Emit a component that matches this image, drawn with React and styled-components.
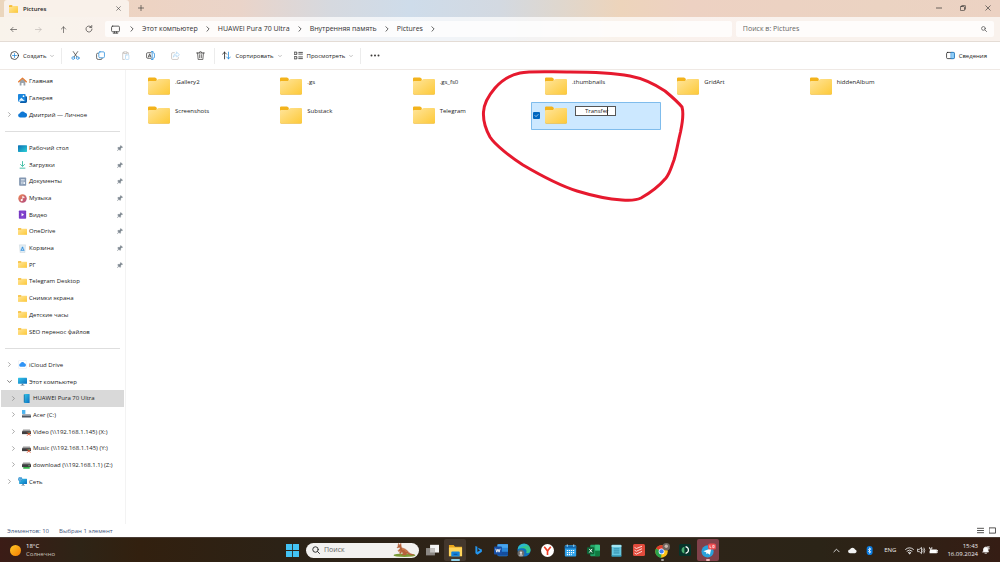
import React from "react";
import styled, { createGlobalStyle } from "styled-components";

const GlobalStyle = createGlobalStyle`
  * { box-sizing: border-box; }
  body {
    margin: 0;
    background: #fff;
    font-family: "Open Sans", "Noto Sans", sans-serif;
    font-size: 6px;
    line-height: 8px;
    color: #1c1c1c;
  }
  button, input { font: inherit; color: inherit; }
  svg { display: block; flex: none; }
`;

const Window = styled.div`
  display: flex;
  flex-direction: column;
  min-height: 100vh;
`;

const Chrome = styled.header`
  background: linear-gradient(90deg, #ebd6bd 0%, #edd3c3 15%, #ead4c9 24%, #d6d9df 33%, #cedcea 41%, #d3d9e1 50%, #dfd7ce 56%, #edd4bb 62%, #edd1c2 69%, #ebd3c2 88%, #ecd2c3 100%);
`;

const TitleBar = styled.div`
  display: flex;
  height: 17px;
  padding-left: 4px;
`;

const Tab = styled.div`
  display: flex;
  align-items: center;
  gap: 5px;
  width: 125px;
  padding: 0 6px 0 5px;
  border-radius: 3px 3px 0 0;
  background: #f9f1ea;
  font-weight: 600;
`;

const Spacer = styled.div`
  flex: 1;
`;

const IconButton = styled.button`
  display: flex;
  flex: none;
  align-items: center;
  justify-content: center;
  width: ${(p) => p.$w || 25}px;
  height: ${(p) => p.$h || 16}px;
  padding: 0;
  border: 0;
  background: none;
  color: ${(p) => (p.disabled ? "#b9b3ae" : "#3d3b3a")};
`;

const AddressBar = styled.div`
  display: flex;
  align-items: center;
  gap: 4px;
  height: 25px;
  padding: 0 6px 0 1px;
  border-bottom: 1px solid #e4dcd5;
  background: rgba(255, 255, 255, 0.7);
`;

const NavButtons = styled.div`
  display: flex;
`;

const Crumbs = styled.nav`
  display: flex;
  flex: 1;
  align-items: center;
  height: 16px;
  padding-left: 6px;
  border-radius: 2px;
  background: rgba(255, 255, 255, 0.75);
  font-size: 7px;
  color: #333;

  > svg:first-child { margin-right: 9px; }
`;

const Crumb = styled.a`
  margin: 0 7px;
  color: inherit;
  text-decoration: none;
  white-space: nowrap;
`;

const SearchBox = styled.label`
  display: flex;
  align-items: center;
  width: 26%;
  height: 16px;
  padding: 0 7px;
  border-radius: 2px;
  background: rgba(255, 255, 255, 0.75);
  color: #555;

  input {
    flex: 1;
    min-width: 0;
    padding: 0;
    border: 0;
    outline: 0;
    background: none;
    font-size: 7px;
  }
  input::placeholder { color: #666; opacity: 1; }
`;

const Toolbar = styled.div`
  display: flex;
  align-items: center;
  height: 28px;
  padding: 0 7px 0 4px;
  border-bottom: 1px solid #efe9e5;
`;

const ToolButton = styled.button`
  display: flex;
  align-items: center;
  gap: 4px;
  height: 20px;
  padding: 0 6px;
  border: 0;
  background: none;
  white-space: nowrap;
`;

const Divider = styled.span`
  width: 1px;
  height: 16px;
  margin: 0 1px;
  background: #ececec;
`;

const Body = styled.div`
  display: flex;
  flex: 1;
`;

const Sidebar = styled.nav`
  flex: none;
  width: 126px;
  padding: 3px 1px 0;
  border-right: 1px solid #f3f3f3;
`;

const Tree = styled.ul`
  display: grid;
  grid-auto-rows: 1fr;
  height: 417px;
  margin: 0;
  padding: 0;
  list-style: none;
`;

const TreeRow = styled.li`
  display: flex;
  align-items: center;
  padding-left: ${(p) => (p.$nested ? 8 : 4)}px;
  padding-right: 1px;
  background: ${(p) => (p.$selected ? "#d9d9d9" : "none")};
`;

const TreeArrow = styled.span`
  display: flex;
  justify-content: center;
  width: 8px;
  margin-right: 5px;
  color: ${(p) => (p.$open ? "#333" : "#777")};
`;

const TreeLink = styled.a`
  display: flex;
  flex: 1;
  align-items: center;
  gap: 2px;
  color: #1c1c1c;
  text-decoration: none;
  white-space: nowrap;
`;

const TreeRule = styled.li`
  align-self: center;
  height: 1px;
  margin: 0 4px;
  background: #dedede;
`;

const Files = styled.main`
  position: relative;
  flex: 1;
  padding: 3px 8px 0;
`;

const FileGrid = styled.ul`
  display: grid;
  grid-template-columns: repeat(6, minmax(0, 1fr));
  grid-auto-rows: 28px;
  gap: 1px 2px;
  max-width: 792px;
  margin: 0;
  padding: 0;
  list-style: none;
`;

const FileItem = styled.li`
  display: flex;
  align-items: center;
  padding-bottom: 2px;
  padding-left: ${(p) => (p.$selected ? 1 : 14)}px;
  border-radius: 1px;
  background: ${(p) => (p.$selected ? "#cce8ff" : "none")};
  box-shadow: ${(p) => (p.$selected ? "inset 0 0 0 1px #7fbcec" : "none")};
`;

const FileName = styled.span`
  align-self: flex-start;
  padding: 5px 0 0 5px;
`;

const SelectBox = styled.input`
  appearance: none;
  width: 7px;
  height: 7px;
  margin: 0 5px 0 1px;
  border-radius: 1px;
  background: #0067c0;
`;

const Tick = styled.span`
  position: relative;
  display: flex;

  svg {
    position: absolute;
    left: 2px;
    top: 1px;
    pointer-events: none;
  }
`;

const RenameField = styled.span`
  position: relative;
  align-self: flex-start;
  width: 41px;
  margin: 4px 0 0 8px;

  input {
    display: block;
    width: 100%;
    height: 10px;
    padding: 0 0 0 9px;
    border: 1px solid #555;
    outline: 0;
    background: #fff;
    caret-color: transparent;
  }
`;

const Caret = styled.i`
  position: absolute;
  top: 1px;
  right: 8px;
  width: 1px;
  height: 8px;
  background: #333;
`;

const Loop = styled.svg`
  position: absolute;
  left: 354px;
  top: 0;
  overflow: visible;
  pointer-events: none;
`;

const StatusBar = styled.div`
  display: flex;
  align-items: center;
  height: 13px;
  padding: 0 2px 0 7px;
  color: #44567d;

  span { margin-right: 10px; }
`;

const Taskbar = styled.footer`
  display: grid;
  grid-template-columns: 1fr auto 1fr;
  align-items: center;
  height: 25px;
  border-top: 1px solid #4a3c34;
  background: linear-gradient(90deg, #3b1c16 0%, #2e2416 8%, #32200f 14%, #2c2216 28%, #2f2419 60%, #2b2417 82%, #351d14 100%);
  color: #eee;
`;

const Weather = styled.div`
  display: flex;
  align-items: center;
  gap: 5px;
  padding-left: 10px;
  color: #c9c0ba;

  strong { display: block; color: #fff; font-weight: 400; }
`;

const Apps = styled.div`
  display: flex;
  align-items: center;
  gap: 1px;
`;

const AppButton = styled.button`
  position: relative;
  display: flex;
  align-items: center;
  justify-content: center;
  width: 22px;
  height: 22px;
  padding: 0;
  border: 0;
  border-radius: 2px;
  background: ${(p) => p.$bg || "none"};

  &::after {
    content: "";
    display: ${(p) => (p.$mark ? "block" : "none")};
    position: absolute;
    bottom: 0;
    width: ${(p) => p.$mark || 0}px;
    height: 2px;
    border-radius: 1px;
    background: ${(p) => p.$markColor || "#a9a39e"};
  }
`;

const TaskSearch = styled.label`
  display: flex;
  align-items: center;
  gap: 4px;
  width: 113px;
  height: 15px;
  margin: 0 1px 0 2px;
  padding: 0 3px 0 6px;
  border-radius: 8px;
  background: #f3f1ef;
  color: #333;

  input {
    flex: 1;
    min-width: 0;
    padding: 0;
    border: 0;
    outline: 0;
    background: none;
    font-size: 7px;
  }
  input::placeholder { color: #666; opacity: 1; }
`;

const Tray = styled.div`
  display: flex;
  align-items: center;
  justify-content: flex-end;
  padding-right: 10px;
`;

const TrayIcons = styled.div`
  display: flex;
  align-items: center;
  gap: ${(p) => p.$gap}px;
  margin-right: ${(p) => p.$after}px;
`;

const Clock = styled.time`
  display: block;
  margin-right: 4px;
  text-align: right;
`;

const HiddenDefs = styled.svg`
  position: absolute;
`;

/* Drawings */

const Line = ({ d, s = 8, w = 1.4, children, ...rest }) => (
  <svg width={s} height={s} viewBox="0 0 16 16" fill="none" stroke="currentColor" strokeWidth={w} strokeLinecap="round" strokeLinejoin="round" {...rest}>
    {d && <path d={d} />}
    {children}
  </svg>
);

const Right = ({ s = 6 }) => <Line s={s} w={2} d="M5 2l6 6-6 6" />;
const Down = ({ s = 4, w = 2, color }) => <Line s={s} w={w} color={color} d="M2 5l6 6 6-6" />;
const Cross = ({ s = 6 }) => <Line s={s} w={1.8} d="M2 2l12 12M14 2L2 14" />;

const Defs = () => (
  <HiddenDefs width="0" height="0" aria-hidden="true">
    <defs>
      <linearGradient id="folder" x1="0" y1="0" x2="1" y2="1">
        <stop offset="0" stopColor="#ffe59c" />
        <stop offset="1" stopColor="#fdc937" />
      </linearGradient>
      <linearGradient id="screen" x1="0" y1="0" x2="1" y2="1">
        <stop offset="0" stopColor="#35c6e8" />
        <stop offset="1" stopColor="#0a6fc0" />
      </linearGradient>
      <linearGradient id="desk" x1="0" y1="0" x2="1" y2="1">
        <stop offset="0" stopColor="#0a6cb4" />
        <stop offset="1" stopColor="#2cd0d6" />
      </linearGradient>
      <linearGradient id="sun" x1="0" y1="0" x2="1" y2="1">
        <stop offset="0" stopColor="#ffc928" />
        <stop offset="1" stopColor="#f57c00" />
      </linearGradient>
      <linearGradient id="music" x1="0" y1="0" x2="1" y2="1">
        <stop offset="0" stopColor="#ee8a55" />
        <stop offset="1" stopColor="#b0457f" />
      </linearGradient>
    </defs>
  </HiddenDefs>
);

const Folder = ({ w = 22, h = 18 }) => (
  <svg width={w} height={h} viewBox="0 0 22 18" preserveAspectRatio="none">
    <path d="M0 1.500Q0 .4 1.200 .4h5.600q.7 0 1.200.7l.8.9v3H0z" fill="#f3b31c" />
    <path d="M0 5q0-.9 1-.9h6.300q.6 0 1.100-.5l1.200-1.100q.4-.4 1-.4H21q1 0 1 1v13.200q0 1.300-1.200 1.300H1.200Q0 17.600 0 16.300z" fill="url(#folder)" />
    <path d="M.3 16.600q.3 1 1.200 1h19q1 0 1.200-1" fill="none" stroke="#e9ae27" strokeWidth=".5" />
  </svg>
);

const Glyph = ({ s = 9, children }) => <svg width={s} height={s} viewBox="0 0 16 16">{children}</svg>;

const monitor = (
  <>
    <rect x="0" y="1.500" width="16" height="10.500" rx="1" fill="url(#screen)" />
    <path d="M6.500 12h3v2h2v1h-7v-1h2z" fill="#5c7c93" />
  </>
);

const drive = (accent) => (
  <>
    <path d="M2 4.500h12l2 4v4.500H0V8.500z" fill="#9a9a9a" />
    <rect x="0" y="7.500" width="16" height="5" rx="1" fill="#3e3e40" />
    <circle cx="12.500" cy="10" r="1" fill="#8be08b" />
    {accent}
  </>
);

const glyphs = {
  home: (
    <>
      <path d="M3 7l5-4.500L13 7v8h-3.200v-4.500H6.200V15H3z" fill="#9aa3ab" />
      <path d="M1.200 8.500L8 2l6.800 6.500" fill="none" stroke="#e8792c" strokeWidth="2.200" strokeLinecap="round" strokeLinejoin="round" />
    </>
  ),
  gallery: (
    <>
      <path d="M12 4h2.500q1.500 0 1.500 1.500v8q0 2.500-2.500 2.500H5q-1.500 0-1.500-1.500z" fill="#0b5ca8" />
      <rect x="0" y="0" width="13.500" height="13.500" rx="1.500" fill="#1b86dd" />
      <path d="M1 12l5-5.500 6 6z" fill="#e4f6ff" />
      <circle cx="9.800" cy="3.800" r="1.500" fill="#fff" />
    </>
  ),
  cloud: <path d="M4 13.500a4 4 0 01-.6-7.900 5 5 0 019-.6A4.300 4.300 0 0112.500 13.500z" fill="#0f78d4" />,
  desktop: <rect x="0" y="2" width="16" height="12" rx="1" fill="url(#desk)" />,
  download: <path d="M8 2v9M4 7.500L8 11.500l4-4M3 14.500h10" fill="none" stroke="#2bb59a" strokeWidth="1.500" />,
  doc: (
    <>
      <rect x="2" y="1" width="12.500" height="14.500" rx="1.200" fill="#8397b1" />
      <path d="M5 4.500h7M5 7h7M5 9.500h3.500M5 12h3.500" stroke="#eef4fb" strokeWidth="1.300" />
      <rect x="9.500" y="9" width="3" height="3.500" fill="#eef4fb" />
    </>
  ),
  music: (
    <>
      <circle cx="8" cy="8" r="7.500" fill="url(#music)" />
      <path d="M7.800 11V4l3.200 1.300v1.900L8.600 6.200" fill="#fff" stroke="#fff" strokeWidth=".6" />
      <circle cx="6.600" cy="10.800" r="1.900" fill="#fff" />
    </>
  ),
  video: (
    <>
      <rect x="1.500" y="1" width="13" height="14.500" rx="1.200" fill="#8443cf" />
      <path d="M3.200 2.500v12M12.800 2.500v12" stroke="#51219a" strokeWidth="1.200" strokeDasharray="1.200 1.200" />
      <path d="M6.300 5.500l4.500 2.800-4.500 2.800z" fill="#fff" />
    </>
  ),
  bin: (
    <>
      <path d="M2.500 1.500h11l-1.300 14H3.800z" fill="#e3edf3" stroke="#bfcbd3" strokeWidth=".7" />
      <path d="M8 4.800l2 3H6zM4.800 11.500l1.300-2.700 1.800 2.700zM11.200 11.500l-1.300-2.700-1.800 2.700z" fill="#2a8ee0" stroke="#2a8ee0" strokeWidth=".7" />
    </>
  ),
  icloud: (
    <>
      <rect x=".5" y=".5" width="15" height="15" rx="3" fill="#fff" stroke="#e4e9ef" />
      <path d="M4.300 12a2.900 2.900 0 01-.1-5.600 3.800 3.800 0 017.200-.6 3.200 3.200 0 01.6 6.200z" fill="#2f93f5" />
    </>
  ),
  monitor,
  phone: (
    <>
      <rect x="4" y="0" width="9.500" height="16" rx="1" fill="url(#screen)" />
      <path d="M4 1v14" stroke="#0b6aa2" strokeWidth="1.500" />
    </>
  ),
  disk: (
    <>
      <path d="M0 0h6v7H0z" fill="#4db4ef" />
      <path d="M1 8h14l1 2v3.500H0V10z" fill="#4c5560" />
      <path d="M1.500 8h13l1 2H.5z" fill="#a7b0b8" />
    </>
  ),
  netRed: drive(<path d="M9 9.500l6 6M15 9.500l-6 6" stroke="#e2502a" strokeWidth="1.600" />),
  netGreen: drive(<rect x="2" y="12.500" width="12" height="3" rx="1.500" fill="#35b44a" />),
  network: (
    <>
      <g transform="translate(2 2) scale(.88)">{monitor}</g>
      <circle cx="4" cy="4" r="3.800" fill="#2787c8" />
      <path d="M.5 4h7M4 .3c-2 2.200-2 5.200 0 7.400M4 .3c2 2.200 2 5.200 0 7.400" stroke="#aee3ff" strokeWidth=".7" fill="none" />
    </>
  ),
};

const Pin = () => (
  <svg width="6" height="6" viewBox="0 0 16 16">
    <path d="M10 1l5 5-1.500 1-1-.2-3 3 .2 3.200-1.500 1.500-3-3L1 15.500.5 15l4-4.200-3-3L3 6.300l3.200.2 3-3L9 2.500z" fill="#7b858e" stroke="#7b858e" />
  </svg>
);

const Kangaroo = () => (
  <svg width="23" height="14" viewBox="0 0 23 14">
    <ellipse cx="11.500" cy="12.300" rx="11" ry="1.700" fill="#7a9c36" />
    <path d="M5 3.500L5.500.5l1.200 2L7.800.4l.4 3 .5 1.500c2.500.6 4.800 1.500 6.200 3.500 1 1.600 3.500 3 6 3.400-2.600.8-5.300-.3-7-1.900l-.8 2H8.600l1.700-1.500-1.500-2-1 2-1.200-.2.900-2.700-1.800 1-.6-.8 2-2.200-.2-1.300L4 4.800z" fill="#b5623a" stroke="#b5623a" strokeWidth=".6" />
    <path d="M9 6c2 .3 3.500 1.200 4.500 3" stroke="#d98a58" strokeWidth=".8" fill="none" />
  </svg>
);

const apps = [
  ["Представление задач", <Glyph s={13}><rect x="5" y="1" width="11" height="9.500" fill="#f4f4f4" /><rect x="0" y="5" width="11" height="9" fill="#8c8884" /><rect x="5" y="5" width="6" height="5.500" fill="#c4c2c0" /></Glyph>],
  ["Проводник", <Glyph s={15}><path d="M1 2h5l1.500 2H15v10H1z" fill="#e9a51c" /><path d="M1 4.800h14V14H1z" fill="#ffd45a" /><path d="M4.500 9h7q1 0 1 1v4.500h-9V10q0-1 1-1z" fill="#1583dc" /><path d="M6 12h4" stroke="#0b4e93" /></Glyph>, { $bg: "#43372d", $mark: 9, $markColor: "#8fd0e8" }],
  ["Bing", <Glyph s={9}><path d="M2.500 0l3.500 1.500v9l5-2.800-2.500-1.200L7 3l7 3v4L6 15.500 2.500 13z" fill="#2496ef" /></Glyph>],
  ["Word", <Glyph s={14}><rect x="4" y="1" width="12" height="14" rx="1.500" fill="#2a86d8" /><path d="M4 1.500h12v4H4z" fill="#48a5ee" /><path d="M4 10h12v4.500H4z" fill="#144d9c" /><rect x="0" y="4" width="9" height="9" rx="1" fill="#174ea6" /><path d="M2 6.500l1.200 4L4.500 7l1.300 3.500L7 6.500" stroke="#fff" fill="none" /></Glyph>],
  ["Edge", <Glyph s={14}><circle cx="8" cy="8" r="7.500" fill="#0f70bf" /><path d="M.8 7A7.400 7.400 0 0115.500 8c0 3-2.500 4-5 3.500 1.500-3.500-1-5.500-4-5.500C4 6 2 6.500.8 7z" fill="#35c78e" /><path d="M.8 7C2 1 9 0 12.500 3 8 2.500 5 5 .8 7z" fill="#2ab4dc" /><circle cx="4.500" cy="12" r="3.900" fill="#6b6b6b" /><circle cx="4.500" cy="11" r="1.400" fill="#ddd" /><path d="M2 14.300q2.500-2.800 5 0" fill="#ddd" /></Glyph>],
  ["Яндекс", <Glyph s={13}><circle cx="8" cy="8" r="8" fill="#fff" /><path d="M4 3.500l4 5v5" stroke="#f03e26" strokeWidth="2" fill="none" /><path d="M12 3.500l-4 5" stroke="#f03e26" strokeWidth="2" /></Glyph>],
  ["Календарь", <Glyph s={13}><rect x="1" y="1.500" width="14" height="14" rx="1" fill="#2da1ea" /><path d="M1 2.500h14v3H1z" fill="#1269ae" /><path d="M3.500 8h9.500M3.500 10.500h9.500M3.500 13h6" stroke="#fff" strokeWidth="1.500" strokeDasharray="1.500 1" /><path d="M4 .5v3M12 .5v3" stroke="#cdeaff" /></Glyph>],
  ["Excel", <Glyph s={13}><rect x="4" y="1" width="12" height="14" rx="1" fill="#21a366" /><path d="M10 8h6v6q0 1-1 1h-5z" fill="#107c41" /><path d="M10 1h5q1 0 1 1v6h-6z" fill="#36c481" /><rect x="0" y="4" width="9" height="8.500" rx="1" fill="#0d6235" /><path d="M2.800 6l3.500 4.500M6.300 6l-3.500 4.500" stroke="#fff" strokeWidth="1.200" /></Glyph>],
  ["Блокнот", <Glyph s={13}><rect x="2" y="1" width="12" height="14.500" rx="1" fill="#65c7e0" /><path d="M2 1.500h12v2H2z" fill="#b4edf7" /><path d="M4.500 6h7M4.500 8.500h7M4.500 11h7" stroke="#237d9d" /><path d="M2 14h12v1.500H2z" fill="#2689a8" /></Glyph>],
  ["Todoist", <Glyph s={12}><rect x="0" y="0" width="16" height="16" rx="2" fill="#e14b3c" /><path d="M2 4.500l2.500 1.500L12 3M2 8.200l2.500 1.500L12 6.200M2 12l2.500 1.500L12 9.800" stroke="#ffe7e3" strokeWidth="1.200" fill="none" /></Glyph>],
  ["Chrome", <Glyph s={15}><circle cx="7" cy="9" r="6.600" fill="#fbc116" /><path d="M7 9L1.200 5.800A6.600 6.600 0 0113 6.200z" fill="#e33b2e" /><path d="M7 9L1.200 5.800A6.600 6.600 0 006.500 15.600z" fill="#2ba24c" /><circle cx="7" cy="9" r="3.100" fill="#fff" /><circle cx="7" cy="9" r="2.300" fill="#3f7ff0" /><circle cx="12" cy="4" r="4" fill="#6f655f" /><circle cx="12" cy="3.500" r="1.800" fill="#c9b8ad" /></Glyph>, { $mark: 3 }],
  ["Браузер", <Glyph s={12}><rect x="0" y="0" width="16" height="16" rx="2" fill="#07342a" /><path d="M7.200 3.500q-3.800 1-3.800 4.500t3.800 4.500z" fill="#4cae72" /><path d="M8.800 3.500q3.800 1 3.800 4.500t-3.800 4.500" fill="none" stroke="#fff" strokeWidth="1.500" /></Glyph>],
  ["Telegram", <Glyph s={15}><circle cx="7" cy="9" r="6.500" fill="#2aa1da" /><path d="M2.500 8.800L11 5.500 9.500 12.500 7 10.800 5.800 12l-.3-2.200z" fill="#fff" /><rect x="7.500" y=".5" width="8.500" height="6.500" rx="2" fill="#ef4a4f" /><path d="M9.500 2.500v2.500h1.500M12.500 2.500h1.500v2.500h-1.500z" stroke="#fff" strokeWidth=".7" fill="none" /></Glyph>, { $bg: "#81414a", $mark: 4, $markColor: "#f3b5b5" }],
];

const tree = [
  { icon: "home", text: "Главная" },
  { icon: "gallery", text: "Галерея" },
  { icon: "cloud", text: "Дмитрий — Личное", arrow: "right" },
  null,
  { icon: "desktop", text: "Рабочий стол", pin: true },
  { icon: "download", text: "Загрузки", pin: true },
  { icon: "doc", text: "Документы", pin: true },
  { icon: "music", text: "Музыка", pin: true },
  { icon: "video", text: "Видео", pin: true },
  { icon: "folder", text: "OneDrive", pin: true },
  { icon: "bin", text: "Корзина", pin: true },
  { icon: "folder", text: "РГ", pin: true },
  { icon: "folder", text: "Telegram Desktop" },
  { icon: "folder", text: "Снимки экрана" },
  { icon: "folder", text: "Детские часы" },
  { icon: "folder", text: "SEO перенос файлов" },
  null,
  { icon: "icloud", text: "iCloud Drive", arrow: "right" },
  { icon: "monitor", text: "Этот компьютер", arrow: "down" },
  { icon: "phone", text: "HUAWEI Pura 70 Ultra", arrow: "right", nested: true, selected: true },
  { icon: "disk", text: "Acer (C:)", arrow: "right", nested: true },
  { icon: "netRed", text: "Video (\\\\192.168.1.145) (X:)", arrow: "right", nested: true },
  { icon: "netRed", text: "Music (\\\\192.168.1.145) (Y:)", arrow: "right", nested: true },
  { icon: "netGreen", text: "download (\\\\192.168.1.1) (Z:)", arrow: "right", nested: true },
  { icon: "network", text: "Сеть", arrow: "right" },
];

const folders = [".Gallery2", ".gs", ".gs_fs0", ".thumbnails", "GridArt", "hiddenAlbum", "Screenshots", "Substack", "Telegram"];
const crumbs = ["Этот компьютер", "HUAWEI Pura 70 Ultra", "Внутренняя память", "Pictures"];

const blue = "#1e88dc";
const gray = "#888";

export default function App() {
  return (
    <Window>
      <GlobalStyle />
      <Defs />
      <Chrome>
        <TitleBar>
          <Tab>
            <Folder w={9} h={8} />
            Pictures
            <Spacer />
            <IconButton $w={10} $h={12} aria-label="Закрыть вкладку"><Cross s={5} /></IconButton>
          </Tab>
          <IconButton $w={24} aria-label="Новая вкладка"><Line s={6} w={1.8} d="M8 1v14M1 8h14" /></IconButton>
          <Spacer />
          <IconButton $w={24} $h={15} aria-label="Свернуть"><Line s={6} w={2} d="M1 8h14" /></IconButton>
          <IconButton $w={24} $h={15} aria-label="Развернуть">
            <Line s={6} w={2}><rect x="1" y="4" width="11" height="11" rx="2" /><path d="M5 1h7q3 0 3 3v7" /></Line>
          </IconButton>
          <IconButton $w={25} $h={15} aria-label="Закрыть"><Cross /></IconButton>
        </TitleBar>
        <AddressBar>
          <NavButtons>
            <IconButton aria-label="Назад"><Line s={7} d="M15 8H2M7 3L2 8l5 5" /></IconButton>
            <IconButton disabled aria-label="Вперёд"><Line s={7} d="M1 8h13M9 3l5 5-5 5" /></IconButton>
            <IconButton aria-label="Вверх"><Line s={7} d="M8 15V2M3 7l5-5 5 5" /></IconButton>
            <IconButton aria-label="Обновить"><Line d="M14 8a6 6 0 11-2-4.500M13.500 1v4h-4" /></IconButton>
          </NavButtons>
          <Crumbs aria-label="Путь">
            <Line s={9}><rect x="1" y="2" width="14" height="10" rx="2" /><path d="M6 12v2M10 12v2M4 14.500h8" /></Line>
            <Right />
            {crumbs.map((c) => (
              <React.Fragment key={c}>
                <Crumb href="#">{c}</Crumb>
                <Right />
              </React.Fragment>
            ))}
          </Crumbs>
          <SearchBox>
            <input placeholder="Поиск в: Pictures" aria-label="Поиск в: Pictures" />
            <Line s={6} w={2}><circle cx="6.500" cy="6.500" r="5" /><path d="M10.500 10.500L15 15" /></Line>
          </SearchBox>
        </AddressBar>
      </Chrome>

      <Toolbar>
        <ToolButton>
          <Line s={9} w={1.300}><circle cx="8" cy="8" r="7" /><path d="M8 4.500v7M4.500 8h7" stroke={blue} /></Line>
          Создать
          <Down color={gray} />
        </ToolButton>
        <Divider />
        <IconButton aria-label="Вырезать">
          <Line s={9} w={1.300}><path d="M4 1l6.500 9.500M12 1L5.500 10.500" /><circle cx="4" cy="12.500" r="2.400" stroke={blue} /><circle cx="12" cy="12.500" r="2.400" stroke={blue} /></Line>
        </IconButton>
        <IconButton aria-label="Копировать">
          <Line s={9} w={1.300}><path d="M4 4H3Q1 4 1 6v6q0 3 3 3h5q2 0 2-2" /><rect x="5" y="1.500" width="10" height="10.500" rx="2" stroke={blue} /></Line>
        </IconButton>
        <IconButton disabled aria-label="Вставить">
          <Line s={9} w={1.200}><path d="M6 15H3V3h2m6 0h2v3M5.500 1.500h5v3h-5z" /><rect x="8" y="7" width="6" height="8" rx="1" stroke="#a9d3f2" /></Line>
        </IconButton>
        <IconButton aria-label="Переименовать">
          <Line s={9} w={1.300}><path d="M9 3H3Q1 3 1 5v6q0 2 2 2h6M4 11l2.500-6L9 11M5 9h3" /><path d="M9.500 1h3m-1.500 0v14m-1.500 0h3M13 3q2 0 2 2v6q0 2-2 2" stroke={blue} /></Line>
        </IconButton>
        <IconButton disabled aria-label="Поделиться">
          <Line s={9} w={1.200}><path d="M6 3H3Q1 3 1 5v8q0 2 2 2h8q2 0 2-2v-2" /><path d="M10 2l5 4.500-5 4V8Q6 8 4 11q0-6 6-6.500z" stroke="#a9d3f2" /></Line>
        </IconButton>
        <IconButton aria-label="Удалить">
          <Line s={9} w={1.300} d="M1 3.500h14M5.500 3.500Q5.500 1 8 1t2.500 2.500M2.800 3.500l1 11.500h8.400l1-11.500M6.500 6.500v5.500M9.500 6.500v5.500" />
        </IconButton>
        <Divider />
        <ToolButton>
          <Line s={9} w={1.400}><path d="M4.500 14V2M1 5.500L4.500 2 8 5.500" /><path d="M11.500 2v12M8 10.500l3.500 3.500 3.500-3.500" stroke={blue} /></Line>
          Сортировать
          <Down color={gray} />
        </ToolButton>
        <ToolButton>
          <Line s={9} w={1.300}><rect x="1" y="2" width="4" height="4" /><rect x="1" y="10" width="4" height="4" /><path d="M8.500 2.500H15M8.500 5.500H15M8.500 10.500H15M8.500 13.500H15" /></Line>
          Просмотреть
          <Down color={gray} />
        </ToolButton>
        <Divider />
        <IconButton aria-label="Ещё">
          <svg width="10" height="3" viewBox="0 0 10 3" fill="currentColor"><circle cx="1.500" cy="1.500" r="1" /><circle cx="5" cy="1.500" r="1" /><circle cx="8.500" cy="1.500" r="1" /></svg>
        </IconButton>
        <Spacer />
        <ToolButton>
          <Line s={9} w={1.300}><rect x="1" y="2.500" width="14" height="11" rx="2" /><path d="M9.500 2.500H13q2 0 2 2v7q0 2-2 2H9.500z" fill="#8fcdf7" stroke={blue} /></Line>
          Сведения
        </ToolButton>
      </Toolbar>

      <Body>
        <Sidebar aria-label="Область навигации">
          <Tree>
            {tree.map((n, i) =>
              n ? (
                <TreeRow key={i} $nested={n.nested} $selected={n.selected}>
                  <TreeArrow $open={n.arrow === "down"}>
                    {n.arrow === "right" && <Right s={5} />}
                    {n.arrow === "down" && <Down s={5} />}
                  </TreeArrow>
                  <TreeLink href="#">
                    {n.icon === "folder" ? <Folder w={9} h={7} /> : <Glyph s={9}>{glyphs[n.icon]}</Glyph>}
                    {n.text}
                  </TreeLink>
                  {n.pin && <Pin />}
                </TreeRow>
              ) : (
                <TreeRule key={i} role="separator" />
              )
            )}
          </Tree>
        </Sidebar>
        <Files>
          <FileGrid>
            {folders.map((f) => (
              <FileItem key={f}>
                <Folder />
                <FileName>{f}</FileName>
              </FileItem>
            ))}
            <FileItem $selected>
              <Tick>
                <SelectBox type="checkbox" defaultChecked aria-label="Выбрать Transfer" />
                <Line s={5} w={2} stroke="#fff" d="M3 8l3.500 3.500L13 5" />
              </Tick>
              <Folder />
              <RenameField>
                <input defaultValue="Transfer" aria-label="Имя папки" />
                <Caret />
              </RenameField>
            </FileItem>
          </FileGrid>
          <Loop width="206" height="134" viewBox="480 70 206 134" fill="none" stroke="#e6192e" strokeWidth="3" strokeLinecap="round" strokeLinejoin="round">
            <path d="M520 73C530 71 548 72 570 72C590 72 613 73 630 76C646 79 656 85 665 91C671 96 677 101 682 107C684 114 682 125 680.500 132C678 142 677 150 674 160C671 168 670 173 666 178C660 185 650 193 641 198C635 201 628 200.500 622 200C607 199 590 195 577 191C558 185 540 175 523 165C512 158 495 145 490 137C485 128 483 120 483.500 112C484 102 489 95 495 88C502 80 510 75 520 73" />
          </Loop>
        </Files>
      </Body>

      <StatusBar>
        <span>Элементов: 10</span>
        <span>Выбран 1 элемент</span>
        <Spacer />
        <IconButton $w={12} $h={10} aria-label="Таблица"><Line s={7} w={2} d="M1 3h14M1 8h14M1 13h14" /></IconButton>
        <IconButton $w={12} $h={10} aria-label="Крупные значки"><Line s={7} w={2}><rect x="1" y="2" width="14" height="12" /></Line></IconButton>
      </StatusBar>

      <Taskbar>
        <Weather>
          <svg width="11" height="11" viewBox="0 0 11 11"><circle cx="5.500" cy="5.500" r="5.500" fill="url(#sun)" /></svg>
          <div><strong>18°C</strong>Солнечно</div>
        </Weather>
        <Apps>
          <AppButton aria-label="Пуск">
            <Glyph s={13}><path d="M0 0h7.500v7.500H0zM8.500 0H16v7.500H8.500zM0 8.500h7.500V16H0zM8.500 8.500H16V16H8.500z" fill="#43c3f5" /></Glyph>
          </AppButton>
          <TaskSearch>
            <Line s={8} w={2}><circle cx="7" cy="7" r="5.500" /><path d="M11 11l4 4" /></Line>
            <input placeholder="Поиск" aria-label="Поиск" />
            <Kangaroo />
          </TaskSearch>
          {apps.map(([name, icon, props]) => (
            <AppButton key={name} aria-label={name} {...props}>{icon}</AppButton>
          ))}
        </Apps>
        <Tray>
          <TrayIcons $gap={8} $after={10}>
            <Line s={7} w={2} d="M2 11l6-6 6 6" />
            <Glyph s={9}><path d="M4 13a3.500 3.500 0 01-.6-7 5 5 0 019.200 0A3.600 3.600 0 0112.500 13z" fill="#f2f2f2" /></Glyph>
            <Glyph s={9}><rect x="3" y="0" width="10.500" height="16" rx="5" fill="#0a7be0" /><path d="M5.500 5.500l5 5L8 13V3l2.500 2.500-5 5" fill="none" stroke="#fff" strokeWidth="1.200" /></Glyph>
          </TrayIcons>
          <TrayIcons $gap={3} $after={9}>ENG</TrayIcons>
          <TrayIcons $gap={3} $after={9}>
            <Line s={9} w={1.600}><path d="M1 6q7-6 14 0M3.500 9q4.500-4 9 0M6 11.500q2-1.700 4 0" /><circle cx="8" cy="13.500" r=".7" /></Line>
            <Line s={9} w={1.400} d="M1 6v4h3l4 3.500v-11L4 6zM10.500 5.500q1.500 2.500 0 5M12.500 3.500q3 4.500 0 9" />
            <Glyph s={9}><path d="M3 6h11v7H1V9z" fill="#fff" /><path d="M14 8h2v3h-2M1 2v3h4V2M3 5v4" stroke="#fff" strokeWidth="1.400" fill="none" /></Glyph>
          </TrayIcons>
          <Clock>15:43<br />16.09.2024</Clock>
          <Line s={8} w={1.600}><path d="M2 12h11l-1-2V6Q12 2 8 2T3 6v4z" fill="#fff" /><path d="M6 14.500h3M11 1.500h4l-4 4h4" /></Line>
        </Tray>
      </Taskbar>
    </Window>
  );
}
